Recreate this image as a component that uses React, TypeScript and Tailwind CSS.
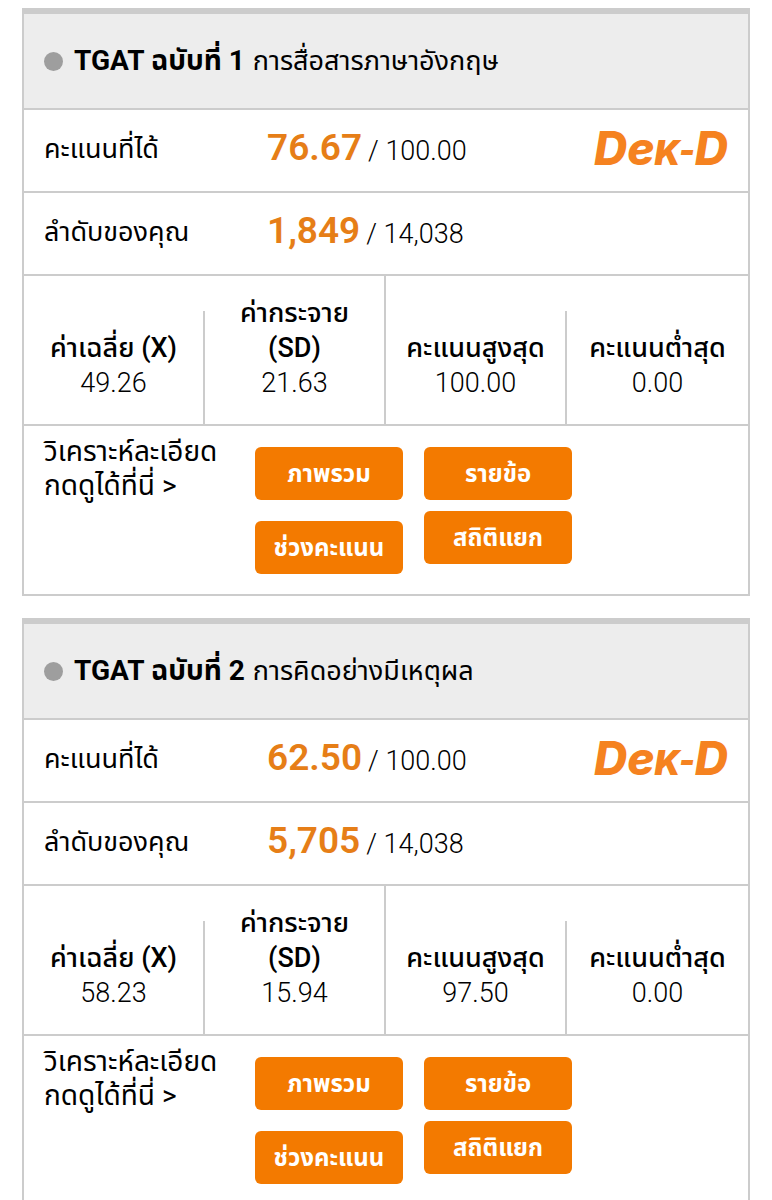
type Result = {
  id: number
  title: string
  subject: string
  score: string
  maxScore: string
  rank: string
  total: string
  stats: { label: string; value: string }[]
}

const RESULTS: Result[] = [
  {
    id: 1,
    title: 'TGAT ฉบับที่ 1',
    subject: 'การสื่อสารภาษาอังกฤษ',
    score: '76.67',
    maxScore: '100.00',
    rank: '1,849',
    total: '14,038',
    stats: [
      { label: 'ค่าเฉลี่ย (X)', value: '49.26' },
      { label: 'ค่ากระจาย (SD)', value: '21.63' },
      { label: 'คะแนนสูงสุด', value: '100.00' },
      { label: 'คะแนนต่ำสุด', value: '0.00' },
    ],
  },
  {
    id: 2,
    title: 'TGAT ฉบับที่ 2',
    subject: 'การคิดอย่างมีเหตุผล',
    score: '62.50',
    maxScore: '100.00',
    rank: '5,705',
    total: '14,038',
    stats: [
      { label: 'ค่าเฉลี่ย (X)', value: '58.23' },
      { label: 'ค่ากระจาย (SD)', value: '15.94' },
      { label: 'คะแนนสูงสุด', value: '97.50' },
      { label: 'คะแนนต่ำสุด', value: '0.00' },
    ],
  },
]

function Logo() {
  return (
    <span className="ml-auto pt-1 font-[Inter,sans-serif] text-[46px] leading-[52px] font-extrabold text-[#f58220] italic">
      De<span className="text-[34px] font-black">K-</span>D
    </span>
  )
}

function ScoreRow({
  label,
  value,
  outOf,
  withLogo,
}: {
  label: string
  value: string
  outOf: string
  withLogo?: boolean
}) {
  return (
    <div className="flex h-[83px] items-center border-b-2 border-[#cccccc] pr-5 pb-1">
      <dt className="w-[243px] shrink-0 pl-5 text-[27px] leading-9">{label}</dt>
      <dd className="flex grow items-center">
        <span className="flex items-baseline gap-1.5">
          <span className="text-[37px] leading-[44px] font-semibold text-[#e67e17]">
            {value}
          </span>
          <span className="text-[27px] font-light">/ {outOf}</span>
        </span>
        {withLogo && <Logo />}
      </dd>
    </div>
  )
}

function ActionButton({ children }: { children: string }) {
  return (
    <button
      type="button"
      className="h-[53px] w-full rounded-md bg-[#f37a00] text-2xl font-bold text-white"
    >
      {children}
    </button>
  )
}

function ResultCard({ result }: { result: Result }) {
  return (
    <section className="border-2 border-t-[6px] border-[#cccccc]">
      <header className="flex h-24 items-center border-b-2 border-[#cccccc] bg-[#ededed] px-5">
        <span className="mr-[11px] size-[19px] shrink-0 rounded-full bg-[#9e9e9e]" />
        <h2 className="text-[28px] leading-9 font-bold">{result.title}</h2>
        <p className="ml-2 text-[27px] leading-9">{result.subject}</p>
      </header>

      <dl>
        <ScoreRow
          label="คะแนนที่ได้"
          value={result.score}
          outOf={result.maxScore}
          withLogo
        />
        <ScoreRow label="ลำดับของคุณ" value={result.rank} outOf={result.total} />
      </dl>

      <dl className="grid grid-cols-4 items-end border-b-2 border-[#cccccc] text-center text-[27px] leading-[35px]">
        {result.stats.map((stat) => (
          <div
            key={stat.label}
            className="border-r-2 border-[#cccccc] px-3 pt-5 pb-[23px] last:border-r-0"
          >
            <dt className="font-medium">{stat.label}</dt>
            <dd className="font-light">{stat.value}</dd>
          </div>
        ))}
      </dl>

      <div className="flex pt-[21px] pb-5">
        <p className="-mt-3 w-[231px] shrink-0 pl-5 text-[28px] leading-[34px]">
          วิเคราะห์ละเอียด
          <br />
          กดดูได้ที่นี่ &gt;
        </p>
        <div className="flex gap-[21px]">
          <div className="flex w-[148px] flex-col gap-[21px]">
            <ActionButton>ภาพรวม</ActionButton>
            <ActionButton>ช่วงคะแนน</ActionButton>
          </div>
          <div className="flex w-[148px] flex-col gap-[11px]">
            <ActionButton>รายข้อ</ActionButton>
            <ActionButton>สถิติแยก</ActionButton>
          </div>
        </div>
      </div>
    </section>
  )
}

export default function App() {
  return (
    <main className="flex flex-col gap-[22px] bg-white px-[22px] py-2 font-[Roboto,'Noto_Sans_Thai','Noto_Sans',sans-serif] text-black">
      {RESULTS.map((result) => (
        <ResultCard key={result.id} result={result} />
      ))}
    </main>
  )
}
